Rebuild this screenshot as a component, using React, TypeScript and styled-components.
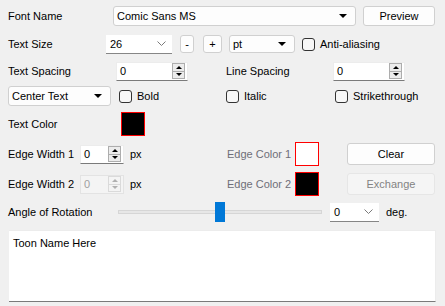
import React from "react";
import styled, { createGlobalStyle } from "styled-components";

const GlobalStyle = createGlobalStyle`
  body {
    margin: 0;
    background: #f0f0f0;
    font-family: "Liberation Sans", Arial, sans-serif;
    font-size: 11px;
    color: #000;
  }
`;

const Panel = styled.div`
  width: 445px;
  height: 306px;
  box-sizing: border-box;
  padding: 6px 9px 0 8px;
  display: flex;
  flex-direction: column;
`;

const Row = styled.div<{ $h: number; $gap: number }>`
  display: flex;
  align-items: center;
  height: ${(p) => p.$h}px;
  margin-top: ${(p) => p.$gap}px;
  flex-shrink: 0;
`;

const Label = styled.span<{ $w?: number; $ml?: number; $muted?: boolean }>`
  flex-shrink: 0;
  width: ${(p) => (p.$w ? `${p.$w}px` : "auto")};
  margin-left: ${(p) => p.$ml ?? 0}px;
  color: ${(p) => (p.$muted ? "#6e6e78" : "#000")};
  white-space: nowrap;
  line-height: 16px;
`;

const Select = styled.div<{ $w: number; $h: number; $ml?: number }>`
  flex-shrink: 0;
  box-sizing: border-box;
  width: ${(p) => p.$w}px;
  height: ${(p) => p.$h}px;
  margin-left: ${(p) => p.$ml ?? 0}px;
  background: #fdfdfd;
  border: 1px solid #d0d0d0;
  border-radius: 3px;
  display: flex;
  align-items: center;
  justify-content: space-between;
  padding: 0 8px 0 3px;
`;

const Caret = styled.span`
  width: 0;
  height: 0;
  border-left: 4px solid transparent;
  border-right: 4px solid transparent;
  border-top: 4px solid #000;
`;

const EditCombo = styled.div<{ $w: number; $h: number; $ml?: number }>`
  flex-shrink: 0;
  box-sizing: border-box;
  width: ${(p) => p.$w}px;
  height: ${(p) => p.$h}px;
  margin-left: ${(p) => p.$ml ?? 0}px;
  background: #fff;
  border-bottom: 1px solid #868686;
  display: flex;
  align-items: center;
  justify-content: space-between;
  padding: 0 6px 0 4px;
`;

const Button = styled.div<{ $w: number; $h: number; $ml?: number; $disabled?: boolean }>`
  flex-shrink: 0;
  box-sizing: border-box;
  width: ${(p) => p.$w}px;
  height: ${(p) => p.$h}px;
  margin-left: ${(p) => p.$ml ?? 0}px;
  background: ${(p) => (p.$disabled ? "#f5f5f5" : "#fdfdfd")};
  border: 1px solid ${(p) => (p.$disabled ? "#e6e6e6" : "#d0d0d0")};
  border-radius: 3px;
  color: ${(p) => (p.$disabled ? "#838383" : "#000")};
  display: flex;
  align-items: center;
  justify-content: center;
`;

const CheckItem = styled.div<{ $w?: number; $ml?: number }>`
  flex-shrink: 0;
  width: ${(p) => (p.$w ? `${p.$w}px` : "auto")};
  margin-left: ${(p) => p.$ml ?? 0}px;
  display: flex;
  align-items: center;
  gap: 5px;
`;

const Box = styled.span`
  box-sizing: border-box;
  width: 13px;
  height: 13px;
  border: 1px solid #333;
  border-radius: 3px;
  background: #f7f7f7;
`;

const Spin = styled.div<{ $w: number; $ml?: number; $disabled?: boolean }>`
  flex-shrink: 0;
  box-sizing: border-box;
  width: ${(p) => p.$w}px;
  height: 19px;
  margin-left: ${(p) => p.$ml ?? 0}px;
  background: ${(p) => (p.$disabled ? "#f4f4f4" : "#fff")};
  border: 1px solid ${(p) => (p.$disabled ? "#e3e3e3" : "#ececec")};
  border-bottom: 1px solid ${(p) => (p.$disabled ? "#e3e3e3" : "#7a7a7a")};
  display: flex;
  align-items: center;
  justify-content: space-between;
  padding: 0 2px 0 3px;
  color: ${(p) => (p.$disabled ? "#a0a0a0" : "#000")};
`;

const SpinButtons = styled.div<{ $disabled?: boolean }>`
  box-sizing: border-box;
  width: 13px;
  height: 16px;
  border: 1px solid ${(p) => (p.$disabled ? "#dadada" : "#adadad")};
  background: ${(p) => (p.$disabled ? "#f4f4f4" : "#ececec")};
  display: flex;
  flex-direction: column;
`;

const SpinHalf = styled.div<{ $up?: boolean; $disabled?: boolean }>`
  flex: 1;
  display: flex;
  align-items: center;
  justify-content: center;
  border-top: ${(p) => (p.$up ? "none" : `1px solid ${p.$disabled ? "#dadada" : "#adadad"}`)};
  &::after {
    content: "";
    width: 0;
    height: 0;
    border-left: 3px solid transparent;
    border-right: 3px solid transparent;
    ${(p) =>
      p.$up
        ? `border-bottom: 3px solid ${p.$disabled ? "#b0b0b0" : "#000"};`
        : `border-top: 3px solid ${p.$disabled ? "#b0b0b0" : "#000"};`}
  }
`;

const Swatch = styled.div<{ $fill: string }>`
  flex-shrink: 0;
  box-sizing: border-box;
  width: 24px;
  height: 24px;
  border: 1px solid #ff0000;
  background: ${(p) => p.$fill};
`;

const Track = styled.div<{ $w: number }>`
  flex-shrink: 0;
  position: relative;
  width: ${(p) => p.$w}px;
  height: 20px;
`;

const Groove = styled.div`
  position: absolute;
  left: 0;
  right: 0;
  top: 8px;
  height: 4px;
  box-sizing: border-box;
  background: #e7e7e7;
  border: 1px solid #d6d6d6;
`;

const Thumb = styled.div<{ $pos: number }>`
  position: absolute;
  top: 0;
  left: ${(p) => p.$pos}px;
  width: 10px;
  height: 20px;
  background: #0078d7;
`;

const TextArea = styled.div`
  flex-shrink: 0;
  box-sizing: border-box;
  margin-top: 8px;
  margin-left: 1px;
  width: 427px;
  height: 72px;
  background: #fff;
  border: 1px solid #ececec;
  border-left: none;
  border-bottom: 1px solid #7a7a7a;
  padding: 4px 4px;
  line-height: 16px;
`;

const Chevron = () => (
  <svg width="9" height="5" viewBox="0 0 9 5">
    <polyline points="0.5,0.5 4.5,4.5 8.5,0.5" fill="none" stroke="#7a7a7a" strokeWidth="1" />
  </svg>
);

const SpinBox = ({ w, value, disabled, ml }: { w: number; value: string; disabled?: boolean; ml?: number }) => (
  <Spin $w={w} $ml={ml} $disabled={disabled}>
    <span>{value}</span>
    <SpinButtons $disabled={disabled}>
      <SpinHalf $up $disabled={disabled} />
      <SpinHalf $disabled={disabled} />
    </SpinButtons>
  </Spin>
);

const Check = ({ label, w, ml }: { label: string; w?: number; ml?: number }) => (
  <CheckItem $w={w} $ml={ml}>
    <Box />
    <span>{label}</span>
  </CheckItem>
);

export default function App() {
  return (
    <>
      <GlobalStyle />
      <Panel>
        <Row $h={20} $gap={0}>
          <Label $w={105}>Font Name</Label>
          <Select $w={243} $h={20}>
            <span>Comic Sans MS</span>
            <Caret />
          </Select>
          <Button $w={72} $h={20} $ml={7}>Preview</Button>
        </Row>

        <Row $h={20} $gap={8}>
          <Label $w={98}>Text Size</Label>
          <EditCombo $w={66} $h={19}>
            <span>26</span>
            <Chevron />
          </EditCombo>
          <Button $w={14} $h={18} $ml={8}>-</Button>
          <Button $w={19} $h={18} $ml={9}>+</Button>
          <Select $w={66} $h={18} $ml={7}>
            <span>pt</span>
            <Caret />
          </Select>
          <Check label="Anti-aliasing" ml={7} />
        </Row>

        <Row $h={20} $gap={7}>
          <Label $w={108}>Text Spacing</Label>
          <SpinBox w={72} value="0" />
          <Label $w={107} $ml={38}>Line Spacing</Label>
          <SpinBox w={72} value="0" />
        </Row>

        <Row $h={20} $gap={5}>
          <Select $w={103} $h={20}>
            <span>Center Text</span>
            <Caret />
          </Select>
          <Check label="Bold" w={107} ml={8} />
          <Check label="Italic" w={109} />
          <Check label="Strikethrough" />
        </Row>

        <Row $h={24} $gap={6}>
          <Label $w={113}>Text Color</Label>
          <Swatch $fill="#000" />
        </Row>

        <Row $h={24} $gap={6}>
          <Label $w={72}>Edge Width 1</Label>
          <SpinBox w={44} value="0" />
          <Label $w={97} $ml={6}>px</Label>
          <Label $w={68} $muted>Edge Color 1</Label>
          <Swatch $fill="#fff" />
          <Button $w={88} $h={22} $ml={28}>Clear</Button>
        </Row>

        <Row $h={24} $gap={6}>
          <Label $w={72}>Edge Width 2</Label>
          <SpinBox w={44} value="0" disabled />
          <Label $w={97} $ml={6}>px</Label>
          <Label $w={68} $muted>Edge Color 2</Label>
          <Swatch $fill="#000" />
          <Button $w={88} $h={22} $ml={28} $disabled>Exchange</Button>
        </Row>

        <Row $h={20} $gap={6}>
          <Label $w={110}>Angle of Rotation</Label>
          <Track $w={204}>
            <Groove />
            <Thumb $pos={97} />
          </Track>
          <EditCombo $w={49} $h={19} $ml={8}>
            <span>0</span>
            <Chevron />
          </EditCombo>
          <Label $ml={7}>deg.</Label>
        </Row>

        <TextArea>Toon Name Here</TextArea>
      </Panel>
    </>
  );
}
